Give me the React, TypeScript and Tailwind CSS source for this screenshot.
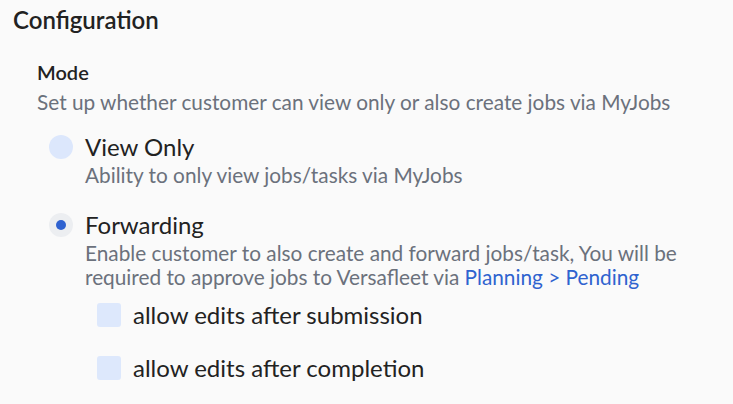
export default function App() {
  return (
    <div className="min-h-screen w-full bg-[#fafafa] font-['Lato','Noto_Sans',sans-serif] text-[#222]">
      <div className="px-[13px] pt-[5px]">
        <h2 className="text-[24px] font-semibold leading-[30px] text-[#222]">Configuration</h2>
        <div className="pl-[24px] pt-[25px]">
          <h3 className="text-[20px] font-semibold leading-[24px] text-[#222]">Mode</h3>
          <p className="mt-[6px] text-[20.8px] leading-[24px] text-[#6b717c]">
            Set up whether customer can view only or also create jobs via MyJobs
          </p>

          <div className="mt-[19px] flex flex-col gap-[24px] pl-[12px]">
            <Radio
              label="View Only"
              description={<>Ability to only view jobs/tasks via MyJobs</>}
            />
            <Radio
              checked
              label="Forwarding"
              description={
                <>
                  Enable customer to also create and forward jobs/task, You will be
                  <br />
                  required to approve jobs to Versafleet via{' '}
                  <a className="text-[#2f63cf]">Planning &gt; Pending</a>
                </>
              }
            />
          </div>

          <div className="mt-[14px] flex flex-col gap-[29px] pl-[60px]">
            <Checkbox label="allow edits after submission" />
            <Checkbox label="allow edits after completion" />
          </div>
        </div>
      </div>
    </div>
  )
}

function Radio({
  label,
  description,
  checked,
}: {
  label: string
  description: React.ReactNode
  checked?: boolean
}) {
  return (
    <div className="flex gap-[12px]">
      <span
        className={
          checked
            ? 'mt-[2px] flex h-[24px] w-[24px] shrink-0 items-center justify-center rounded-full bg-[#eceef1]'
            : 'mt-[2px] h-[24px] w-[24px] shrink-0 rounded-full bg-[#dce7fc]'
        }
      >
        {checked && <span className="h-[10px] w-[10px] rounded-full bg-[#2f62d0]" />}
      </span>
      <div>
        <div className="text-[24px] leading-[28px] text-[#222]">{label}</div>
        <div className="mt-[2px] text-[20.8px] leading-[24px] text-[#6b717c]">{description}</div>
      </div>
    </div>
  )
}

function Checkbox({ label }: { label: string }) {
  return (
    <label className="flex items-center gap-[12px]">
      <span className="h-[24px] w-[24px] shrink-0 rounded-[3px] bg-[#dde8fc]" />
      <span className="text-[24px] leading-[24px] text-[#222]">{label}</span>
    </label>
  )
}
